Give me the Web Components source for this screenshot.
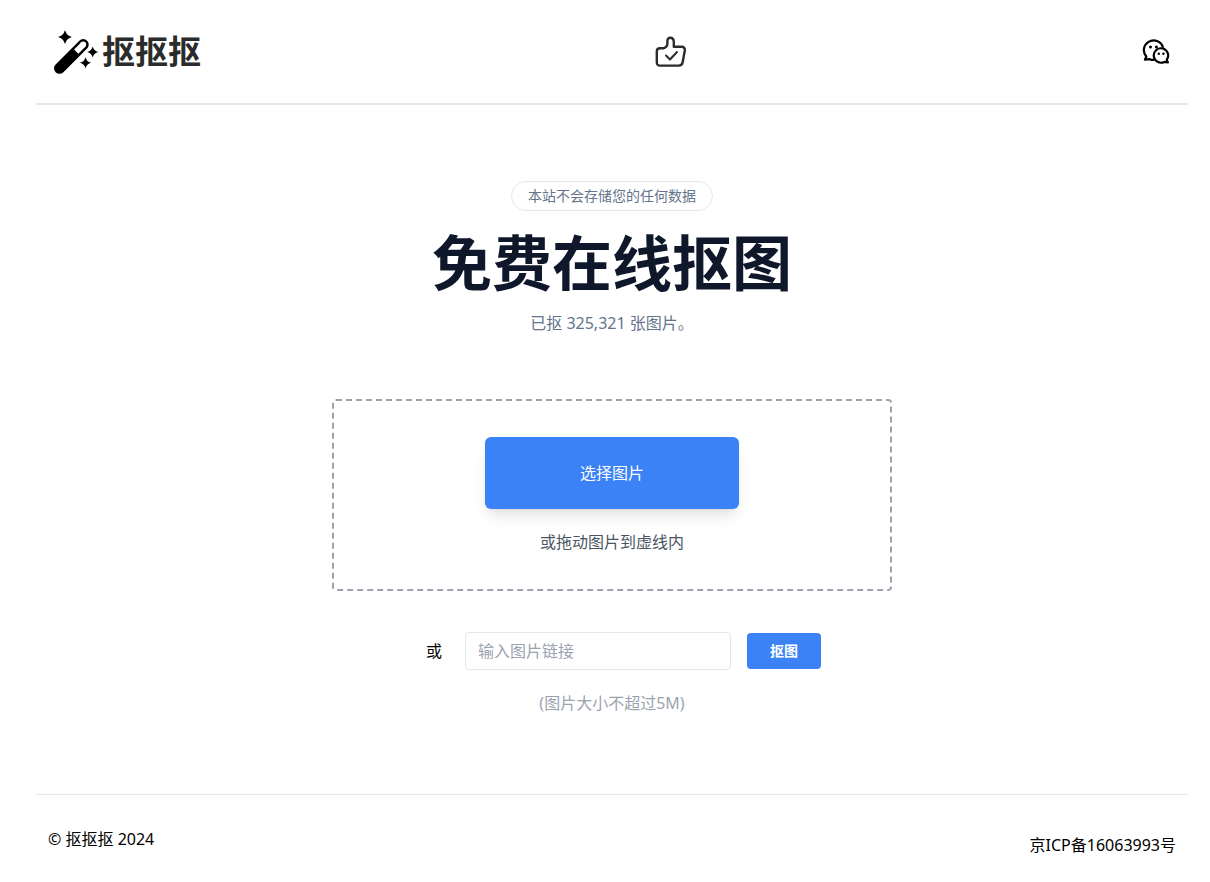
<!DOCTYPE html>
<html lang="zh-CN">
<head>
<meta charset="utf-8">
<meta name="viewport" content="width=device-width, initial-scale=1">
<title>抠抠抠 - 免费在线抠图</title>
<style>
    body {
        margin: 0;
        padding: 0 22px 0 36px;
        background: #fff;
        color: #000;
        font: 16px/24px "Noto Sans", "Noto Sans CJK SC", sans-serif;
    }
</style>
</head>
<body>

<site-header>
    <site-logo slot="logo">抠抠抠</site-logo>
    <icon-link slot="center" icon="thumb" label="推荐"></icon-link>
    <icon-link slot="end" icon="wechat" label="微信"></icon-link>
</site-header>

<main>
    <page-hero>
        <span slot="badge">本站不会存储您的任何数据</span>
        <span slot="title">免费在线抠图</span>
        已抠 325,321 张图片。
    </page-hero>
    <drop-zone action="选择图片">或拖动图片到虚线内</drop-zone>
    <url-form label="或" placeholder="输入图片链接" action="抠图">(图片大小不超过5M)</url-form>
</main>

<site-footer>
    <span>© 抠抠抠 2024</span>
    <a slot="record" href="#">京ICP备16063993号</a>
</site-footer>

<script>
(function() {
    /**
     * Base class: clones the markup of the element into an open shadow root
     */
    class BaseElement extends HTMLElement {
        constructor() {
            super();

            const template = document.createElement('template');
            template.innerHTML = this.template();

            this.attachShadow({mode: 'open'});
            this.shadowRoot.appendChild(template.content.cloneNode(true));
        }
    }


    /*
     *
     *     Header
     * --------------
     *
     */
    class SiteHeader extends BaseElement {
        template() {
            return `
<style>
    :host { display: block; border-bottom: 2px solid #e5e7eb; }
    header {
        display: grid;
        grid-template-columns: 1fr auto 1fr;
        align-items: center;
        height: 103px;
        padding: 0 18px;
        box-sizing: border-box;
    }
    .center { padding-left: 118px; }
    .end { justify-self: end; }
</style>
<header>
    <slot name="logo"></slot>
    <div class="center"><slot name="center"></slot></div>
    <div class="end"><slot name="end"></slot></div>
</header>`;
        }
    }

    class SiteLogo extends BaseElement {
        template() {
            return `
<style>
    :host { display: flex; }
    a {
        display: flex;
        align-items: center;
        gap: 2px;
        color: #2b2b2b;
        font-size: 33px;
        line-height: 46px;
        font-weight: 700;
        text-decoration: none;
    }
    svg { display: block; }
</style>
<a href="#">
    <svg width="46" height="46" viewBox="54 28 46 46" aria-hidden="true">
        <path d="M59.5 67.3 83.2 43.6" stroke="#000" stroke-width="11" stroke-linecap="round"/>
        <path d="M76.2 50.6 83.2 43.6" stroke="#fff" stroke-width="6"/>
        <circle cx="83.2" cy="43.6" r="3" fill="#fff"/>
        <path d="M65 29q1.4 5.6 7 7-5.6 1.4-7 7-1.4-5.6-7-7 5.6-1.4 7-7zM92.7 45.5q1.1 4.4 5.5 5.5-4.4 1.1-5.5 5.5-1.1-4.4-5.5-5.5 4.4-1.1 5.5-5.5zM85.5 56.2q1.1 4.5 5.6 5.6-4.5 1.1-5.6 5.6-1.1-4.5-5.6-5.6 4.5-1.1 5.6-5.6z"/>
    </svg>
    <slot></slot>
</a>`;
        }
    }

    const icons = {
        thumb: `
<svg width="32" height="32" viewBox="0 0 32 32" fill="none" stroke="#2b2b2b" stroke-width="2.4" stroke-linejoin="round" stroke-linecap="round">
    <path d="M5 12.3h3.500c2.500-.6 3.900-2.500 3.900-5V4.600c0-1.800 1.200-2.800 2.700-2.800 2.200 0 3.700 1.800 3.700 4.300v4.700h8c2 0 3.400 1.600 3 3.600l-2.200 12.100c-.4 2-1.700 3.100-3.700 3.100H5c-2 0-3.200-1.200-3.200-3.200V15.500c0-2 1.200-3.200 3.200-3.200z"/>
    <path d="M11 19.500l4 4 7-7.500" stroke-width="2"/>
</svg>`,
        wechat: `
<svg width="28" height="26" viewBox="0 0 28 26" fill="none" stroke="#000" stroke-width="2.2" stroke-linejoin="round">
    <path d="M12.300 20.900c-1.700.2-3.200-.1-4.600-.7l-4.800.5 1.400-3.200C.3 12.900 1.400 6.400 6.100 3.200c5.700-3.800 13.200-1.100 15 5.500"/>
    <path d="M24.700 20.800a7.200 7.200 0 1 0-2.500 2.100l3.700.5z"/>
    <g fill="#000" stroke="none">
        <circle cx="8.500" cy="8" r="1.500"/><circle cx="14.400" cy="8" r="1.500"/>
        <circle cx="16.800" cy="14.700" r="1.200"/><circle cx="21.400" cy="14.700" r="1.200"/>
    </g>
</svg>`
    };

    class IconLink extends BaseElement {
        template() {
            return `
<style>
    :host { display: block; }
    a, svg { display: block; }
</style>
<a href="#" aria-label="${this.getAttribute('label')}">${icons[this.getAttribute('icon')]}</a>`;
        }
    }


    /*
     *
     *     Main content
     * --------------------
     *
     */
    class PageHero extends BaseElement {
        template() {
            return `
<style>
    :host { display: block; padding-top: 76px; text-align: center; color: #64748b; }
    .badge {
        display: inline-block;
        padding: 4px 16px;
        border: 1px solid #e5e7eb;
        border-radius: 16px;
        font-size: 14px;
        line-height: 20px;
    }
    h1 {
        margin: 22px 0 18px;
        color: #0f172a;
        font-size: 60px;
        line-height: 60px;
        font-weight: 700;
    }
    .badge, p { vertical-align: top; margin: 0; }
</style>
<div class="badge"><slot name="badge"></slot></div>
<h1><slot name="title"></slot></h1>
<p><slot></slot></p>`;
        }
    }

    class DropZone extends BaseElement {
        template() {
            return `
<style>
    :host {
        display: flex;
        flex-direction: column;
        align-items: center;
        gap: 21px;
        box-sizing: border-box;
        max-width: 560px;
        margin: 64px auto 0;
        padding: 36px 16px 35px;
        border: 2px dashed #9ca3af;
        border-radius: 4px;
        color: #4b5563;
    }
    button {
        width: 254px;
        max-width: 100%;
        padding: 24px;
        border: 0;
        border-radius: 6px;
        background: #3b82f6;
        box-shadow: 0 10px 15px -3px rgba(0, 0, 0, .1), 0 4px 6px -4px rgba(0, 0, 0, .1);
        color: #fff;
        font: inherit;
        cursor: pointer;
    }
</style>
<button type="button">${this.getAttribute('action')}</button>
<div><slot></slot></div>`;
        }
    }

    class UrlForm extends BaseElement {
        template() {
            return `
<style>
    :host { display: block; padding: 41px 0 79px; text-align: center; color: #9ca3af; }
    form { display: flex; align-items: center; justify-content: center; }
    label { padding: 0 23px; color: #000; }
    input {
        width: 266px;
        min-width: 0;
        height: 38px;
        box-sizing: border-box;
        padding: 0 12px;
        border: 1px solid #e5e7eb;
        border-radius: 4px;
        background: #fff;
        font: inherit;
    }
    input::placeholder { color: #9ca3af; opacity: 1; }
    button {
        margin-left: 16px;
        width: 74px;
        height: 36px;
        padding: 0;
        border: 0;
        border-radius: 4px;
        background: #3b82f6;
        color: #fff;
        font: inherit;
        font-size: 14px;
        font-weight: 700;
        cursor: pointer;
    }
    p { margin: 21px 0 0; }
</style>
<form>
    <label for="url">${this.getAttribute('label')}</label>
    <input id="url" type="url" placeholder="${this.getAttribute('placeholder')}">
    <button type="button">${this.getAttribute('action')}</button>
</form>
<p><slot></slot></p>`;
        }
    }


    /*
     *
     *     Footer
     * --------------
     *
     */
    class SiteFooter extends BaseElement {
        template() {
            return `
<style>
    :host { display: block; border-top: 1px solid #e5e7eb; }
    footer {
        display: flex;
        justify-content: space-between;
        padding: 32px 12px 24px;
    }
    .record { padding-top: 6px; }
    ::slotted(a) { color: inherit; text-decoration: none; }
</style>
<footer>
    <div><slot></slot></div>
    <div class="record"><slot name="record"></slot></div>
</footer>`;
        }
    }


    customElements.define('site-header', SiteHeader);
    customElements.define('site-logo', SiteLogo);
    customElements.define('icon-link', IconLink);
    customElements.define('page-hero', PageHero);
    customElements.define('drop-zone', DropZone);
    customElements.define('url-form', UrlForm);
    customElements.define('site-footer', SiteFooter);
})();
</script>
</body>
</html>
